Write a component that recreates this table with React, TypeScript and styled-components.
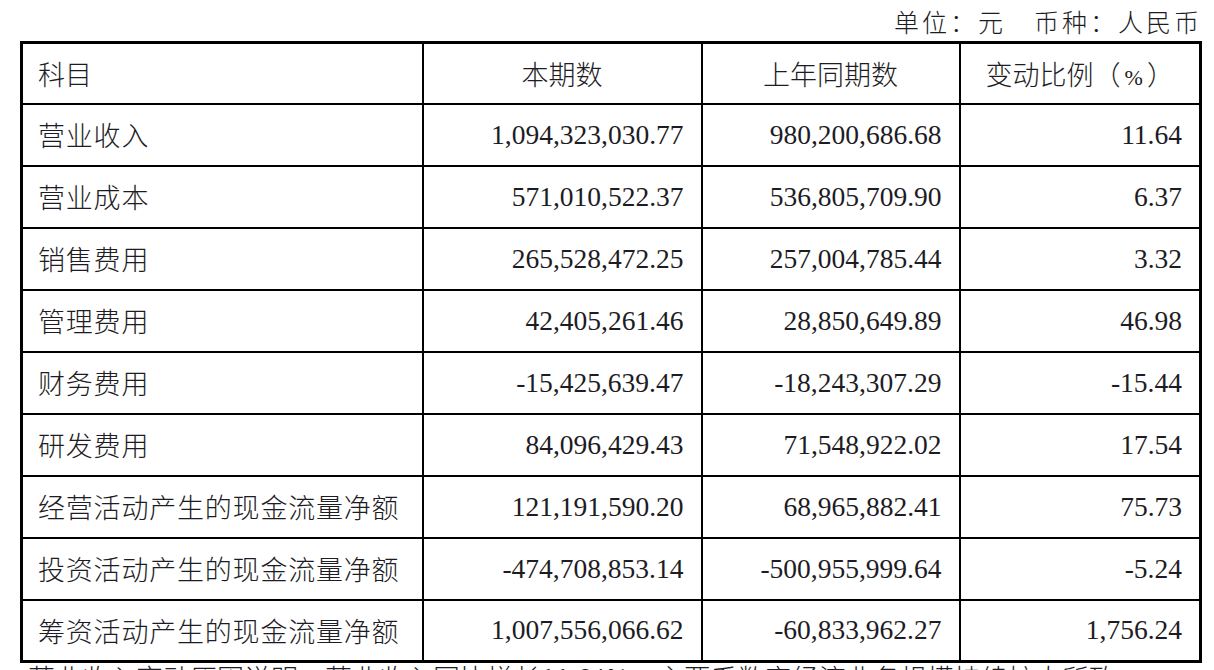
import styled, { createGlobalStyle } from "styled-components";

const GlobalStyle = createGlobalStyle`
  html, body {
    margin: 0;
    padding: 0;
    background: #ffffff;
    overflow: hidden;
  }
`;

const rows = [
    {name: '营业收入', current: '1,094,323,030.77', last: '980,200,686.68', ratio: '11.64'},
    {name: '营业成本', current: '571,010,522.37', last: '536,805,709.90', ratio: '6.37'},
    {name: '销售费用', current: '265,528,472.25', last: '257,004,785.44', ratio: '3.32'},
    {name: '管理费用', current: '42,405,261.46', last: '28,850,649.89', ratio: '46.98'},
    {name: '财务费用', current: '-15,425,639.47', last: '-18,243,307.29', ratio: '-15.44'},
    {name: '研发费用', current: '84,096,429.43', last: '71,548,922.02', ratio: '17.54'},
    {name: '经营活动产生的现金流量净额', current: '121,191,590.20', last: '68,965,882.41', ratio: '75.73'},
    {name: '投资活动产生的现金流量净额', current: '-474,708,853.14', last: '-500,955,999.64', ratio: '-5.24'},
    {name: '筹资活动产生的现金流量净额', current: '1,007,556,066.62', last: '-60,833,962.27', ratio: '1,756.24'},
];

export default function App() {
    return (
        <>
            <GlobalStyle/>
            <Page>
                <Sheet>
                    <Caption>单位：元　币种：人民币</Caption>
                    <Table>
                        <colgroup>
                            <col style={{width: 401}}/>
                            <col style={{width: 279}}/>
                            <col style={{width: 258}}/>
                            <col style={{width: 241}}/>
                        </colgroup>
                        <thead>
                        <HeadRow>
                            <HeadCell $align="left">科目</HeadCell>
                            <HeadCell>本期数</HeadCell>
                            <HeadCell>上年同期数</HeadCell>
                            <HeadCell>变动比例<Paren>（</Paren><Percent>%</Percent><Paren>）</Paren></HeadCell>
                        </HeadRow>
                        </thead>
                        <tbody>
                        {rows.map((r) => (
                            <BodyRow key={r.name}>
                                <NameCell>{r.name}</NameCell>
                                <NumCell>{r.current}</NumCell>
                                <NumCell>{r.last}</NumCell>
                                <NumCell>{r.ratio}</NumCell>
                            </BodyRow>
                        ))}
                        </tbody>
                    </Table>
                </Sheet>
                <Note>营业收入变动原因说明：营业收入同比增长11.64%，主要系数字经济业务规模持续扩大所致。</Note>
            </Page>
        </>
    );
}

const Page = styled.div`
    width: 1214px;
    height: 670px;
    overflow: hidden;
    padding-top: 4px;
    box-sizing: border-box;
    color: #1d1c24;
    font-family: "Liberation Serif", "Noto Sans CJK SC", serif;
`

const Sheet = styled.div`
    width: 1179px;
    margin-left: 20px;
`

const Caption = styled.div`
    font-family: "Noto Sans CJK SC", sans-serif;
    font-weight: 300;
    font-size: 25px;
    letter-spacing: 3px;
    line-height: 34px;
    height: 37px;
    text-align: right;
    margin-right: -3px;
`

const Table = styled.table`
    width: 1179px;
    table-layout: fixed;
    border-collapse: collapse;
    border: 3px solid #000;
`

const HeadRow = styled.tr`
    height: 61px;
`

const BodyRow = styled.tr`
    height: 62px;
`

const HeadCell = styled.th<{ $align?: 'left' | 'center' }>`
    border: 2px solid #000;
    padding: 0 15px;
    text-align: ${(p) => p.$align ?? 'center'};
    font-family: "Noto Sans CJK SC", sans-serif;
    font-weight: 300;
    font-size: 27px;
    white-space: nowrap;
`

const Paren = styled.span`
    font-size: 27px;
`

const Percent = styled.span`
    font-family: "Liberation Serif", serif;
    font-size: 22px;
    padding: 0 4px;
`

const NameCell = styled.td`
    border: 2px solid #000;
    padding: 0 15px;
    font-family: "Noto Sans CJK SC", sans-serif;
    font-weight: 300;
    font-size: 27px;
    letter-spacing: 0.8px;
    white-space: nowrap;
`

const NumCell = styled.td`
    border: 2px solid #000;
    padding: 0 17px 0 0;
    text-align: right;
    font-family: "Liberation Serif", serif;
    font-size: 27.5px;
    white-space: nowrap;
`

const Note = styled.div`
    margin: 1px 0 0 28px;
    font-family: "Noto Sans CJK SC", sans-serif;
    font-weight: 300;
    font-size: 27px;
    line-height: 28px;
    white-space: nowrap;
`
